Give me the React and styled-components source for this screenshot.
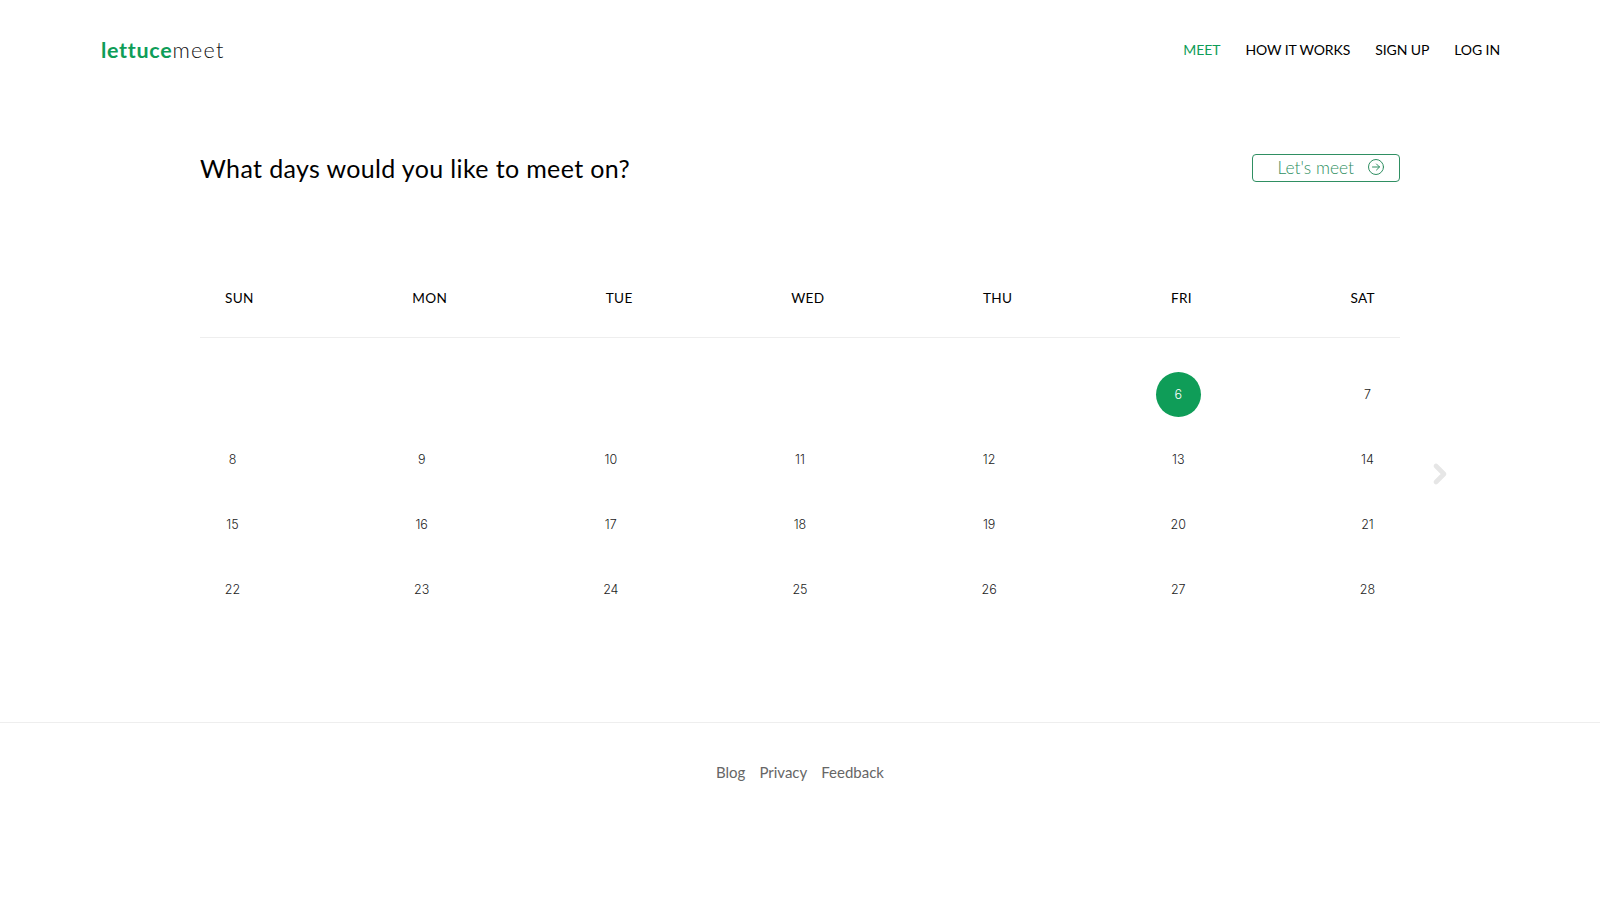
import React from 'react'
import styled, { createGlobalStyle } from 'styled-components'
import { ChevronRight } from 'lucide-react'

const GREEN = '#0f9d58'

const GlobalStyle = createGlobalStyle`
	html, body {
		margin: 0;
		padding: 0;
		background: #fff;
		color: #000;
		font-family: 'Lato', 'Open Sans', sans-serif;
	}
`

const Header = styled.header`
	display: flex;
	justify-content: space-between;
	align-items: center;
	height: 100px;
	padding: 0 100px 0 101px;
`

const Logo = styled.div`
	margin-bottom: 1px;
	font-family: 'Lato', sans-serif;
	font-size: 21.5px;
	font-weight: 300;
	letter-spacing: 1.3px;
	color: #111;

	& b {
		font-weight: 700;
		letter-spacing: 0.7px;
		color: ${GREEN};
	}
`

const Nav = styled.nav`
	display: flex;
	gap: 25px;
	margin-bottom: 2px;
`

const NavLink = styled.a`
	font-size: 14px;
	letter-spacing: -0.1px;
	color: ${props => props.active ? GREEN : '#000'};
`

const Main = styled.main`
	padding: 0 200px;
`

const TitleRow = styled.div`
	display: flex;
	justify-content: space-between;
	align-items: center;
	height: 28px;
	margin-top: 54px;
`

const Title = styled.h1`
	margin: 0;
	font-size: 25px;
	font-weight: 400;
	letter-spacing: 0.36px;
`

const MeetButton = styled.button`
	display: flex;
	justify-content: flex-end;
	align-items: center;
	gap: 13px;
	box-sizing: border-box;
	width: 148px;
	height: 28px;
	padding: 0 14px 2px 0;
	background: #fff;
	border: 1px solid #2f8f62;
	border-radius: 4px;
	color: #2f8f62;
	font-family: inherit;
	font-size: 17.4px;
	font-weight: 300;
`

const Calendar = styled.section`
	position: relative;
	margin-top: 90px;
`

const WeekHeader = styled.div`
	display: flex;
	justify-content: space-between;
	align-items: center;
	height: 51px;
	padding: 0 25px 14px;
	border-bottom: 1px solid #eee;
`

const WeekDay = styled.span`
	font-size: 13.6px;
	letter-spacing: 0.3px;
`

const Dates = styled.div`
	display: grid;
	grid-template-columns: repeat(7, 45px);
	justify-content: space-between;
	row-gap: 20px;
	padding: 34px 10px 0;
`

const DateCell = styled.div`
	display: flex;
	justify-content: center;
	align-items: center;
	height: 45px;
	border-radius: 50%;
	font-family: 'Inter', sans-serif;
	font-size: 12.5px;
	font-weight: 300;
	color: ${props => props.selected ? '#fff' : '#222'};
	background: ${props => props.selected ? GREEN : 'transparent'};
`

const NextArrow = styled(ChevronRight)`
	position: absolute;
	right: -56px;
	top: 186px;
	color: #e6e6e6;
`

const Footer = styled.footer`
	display: flex;
	justify-content: center;
	gap: 14px;
	margin-top: 110px;
	padding-top: 40px;
	border-top: 1px solid #eee;
`

const FooterLink = styled.a`
	font-size: 15px;
	color: #666;
`

const ArrowCircle = () => (
	<svg width='18' height='18' viewBox='0 0 18 18' fill='none' stroke='#2f8f62' strokeWidth='1' strokeLinecap='round' strokeLinejoin='round'>
		<circle cx='9' cy='9' r='7.5' />
		<path d='M5.5 9h7M9.5 6l3 3-3 3' />
	</svg>
)

const days = ['SUN', 'MON', 'TUE', 'WED', 'THU', 'FRI', 'SAT']
const dates = [null, null, null, null, null, 6, 7, 8, 9, 10, 11, 12, 13, 14, 15, 16, 17, 18, 19, 20, 21, 22, 23, 24, 25, 26, 27, 28]

const App = () => (
	<>
		<GlobalStyle />
		<Header>
			<Logo><b>lettuce</b>meet</Logo>
			<Nav>
				<NavLink active>MEET</NavLink>
				<NavLink>HOW IT WORKS</NavLink>
				<NavLink>SIGN UP</NavLink>
				<NavLink>LOG IN</NavLink>
			</Nav>
		</Header>
		<Main>
			<TitleRow>
				<Title>What days would you like to meet on?</Title>
				<MeetButton>Let's meet <ArrowCircle /></MeetButton>
			</TitleRow>
			<Calendar>
				<WeekHeader>
					{days.map(d => <WeekDay key={d}>{d}</WeekDay>)}
				</WeekHeader>
				<Dates>
					{dates.map((d, i) => <DateCell key={i} selected={d === 6}>{d}</DateCell>)}
				</Dates>
				<NextArrow size={32} strokeWidth={3.5} />
			</Calendar>
		</Main>
		<Footer>
			<FooterLink>Blog</FooterLink>
			<FooterLink>Privacy</FooterLink>
			<FooterLink>Feedback</FooterLink>
		</Footer>
	</>
)

export default App
